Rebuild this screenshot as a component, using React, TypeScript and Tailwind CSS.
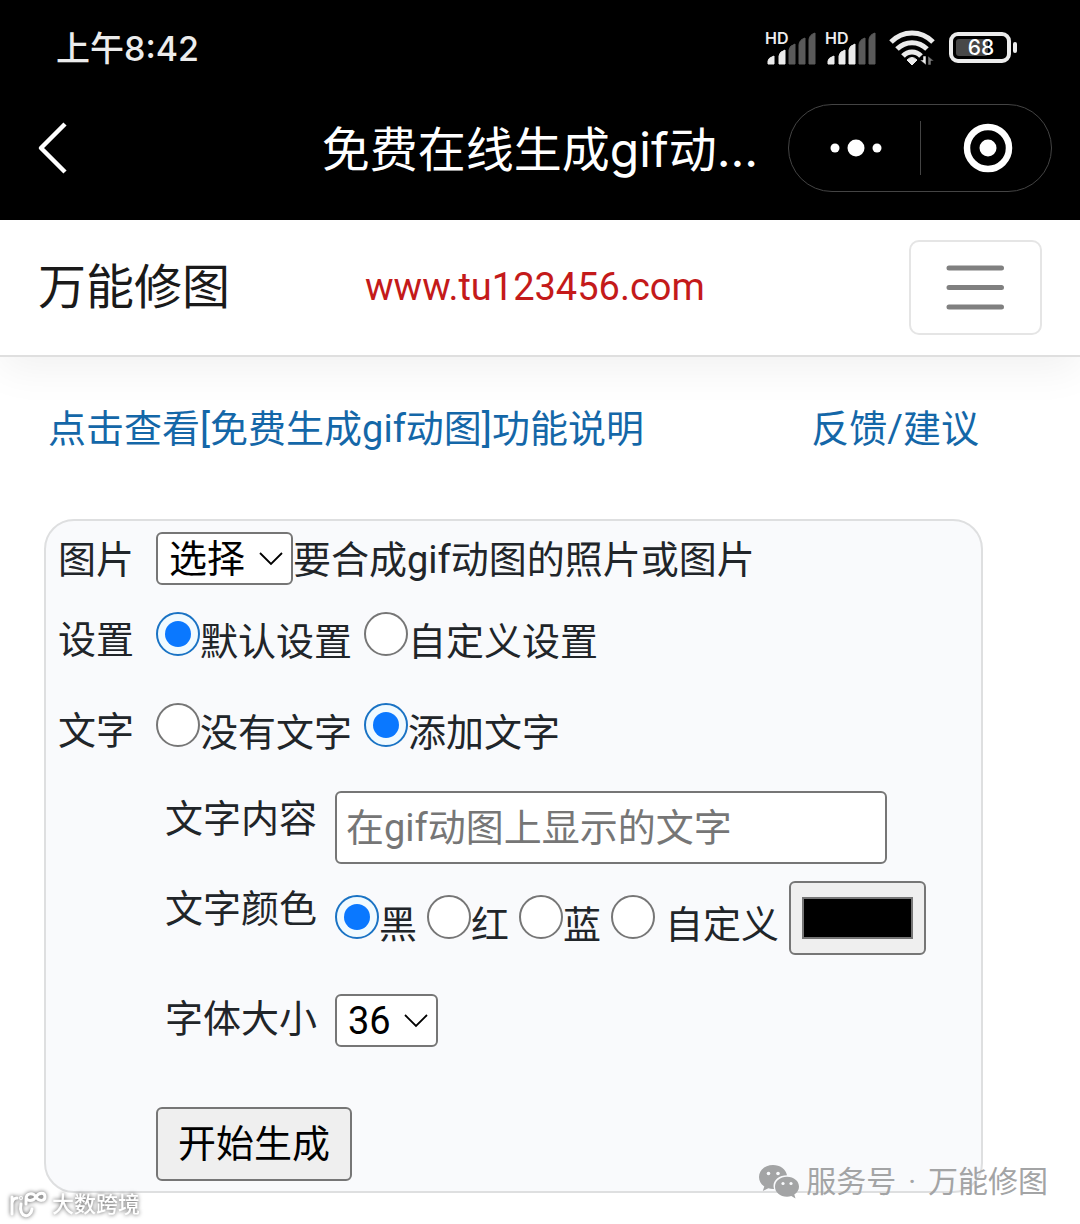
import { useState } from "react";
import type { ReactNode } from "react";

function Signal({ strong }: { strong: number }) {
  const bars = [
    "M3 26V23Q3 20 9 18V26Z",
    "M14 26V18Q14 14 20 12V26Z",
    "M24 26V12Q24 8 30 6V26Z",
    "M34 26V7Q34 2 40 0V26Z",
    "M44 26V2Q44 -3 50 -5V26Z",
  ];
  return (
    <svg width="52" height="46" viewBox="0 -13 52 46" aria-hidden="true">
      {bars.map((d, i) => (
        <path
          key={d}
          d={d}
          fill={i < strong ? "#ececec" : "#5a5a5a"}
          stroke={i < strong ? "#ececec" : "#5a5a5a"}
          strokeLinejoin="round"
        />
      ))}
      <text
        x="0"
        y="6"
        fill="#ececec"
        fontSize="16"
        fontWeight="600"
        fontFamily="Inter, sans-serif"
      >
        HD
      </text>
    </svg>
  );
}

function WifiIcon() {
  return (
    <svg width="46" height="36" viewBox="0 0 46 36" fill="none" aria-hidden="true">
      <g stroke="#ececec" strokeWidth="5">
        <path d="M2 12C14 0 32 0 44 12" />
        <path d="M8 19C16.500 10.500 29.500 10.500 38 19" />
        <path d="M14 26C19 20.500 27 20.500 32 26" />
      </g>
      <path d="M18 30Q23 25 28 30L23 35Z" fill="#ececec" stroke="#ececec" strokeLinejoin="round" />
      <path d="M37 26V35L31 30H34V26Z" fill="#ececec" stroke="#000" strokeWidth="0.500" />
      <path d="M39 35V26L45 31H42V35Z" fill="#777" stroke="#000" strokeWidth="0.500" />
    </svg>
  );
}

function BatteryIcon() {
  return (
    <svg width="70" height="32" viewBox="0 0 70 32" aria-hidden="true">
      <rect x="2" y="2" width="58" height="27" rx="7" fill="none" stroke="#ececec" strokeWidth="4" />
      <rect x="7" y="7" width="32" height="17" rx="3" fill="#484848" />
      <rect x="64" y="10" width="4" height="11" rx="2" fill="#ececec" />
      <text
        x="32"
        y="23"
        textAnchor="middle"
        fill="#fff"
        fontSize="21"
        fontWeight="500"
        fontFamily="Inter, sans-serif"
      >
        68
      </text>
    </svg>
  );
}

function StatusBar() {
  return (
    <div className="flex h-24 items-center justify-between pr-[61px] pl-14 text-[#ececec]">
      <span className="font-[Inter,'Noto_Sans_CJK_SC',sans-serif] text-[34px] font-medium">
        上午8:42
      </span>
      <div className="flex items-center gap-2">
        <Signal strong={2} />
        <Signal strong={3} />
        <div className="flex items-center gap-3.5 pl-1">
          <WifiIcon />
          <BatteryIcon />
        </div>
      </div>
    </div>
  );
}

function TitleBar() {
  return (
    <div className="grid grid-cols-[1fr_auto_1fr] items-center px-7 pt-2 pb-7">
      <button type="button" aria-label="返回" className="justify-self-start pl-2">
        <svg width="34" height="52" viewBox="0 0 34 52" fill="none" stroke="#fff" strokeWidth="4.500" strokeLinejoin="round">
          <path d="M29 2L5 26L29 50" />
        </svg>
      </button>
      <h1 className="pt-1 font-[Inter,'Noto_Sans_CJK_SC',sans-serif] text-5xl leading-[60px] text-white">
        免费在线生成gif动...
      </h1>
      <div className="flex h-[88px] w-[264px] items-center justify-self-end rounded-full border border-[#444] pl-1">
        <button type="button" aria-label="更多" className="flex flex-1 justify-center">
          <svg width="54" height="20" viewBox="0 0 54 20" fill="#fff">
            <circle cx="6" cy="10" r="4.500" />
            <circle cx="27" cy="10" r="8.500" />
            <circle cx="48" cy="10" r="4.500" />
          </svg>
        </button>
        <span className="h-[54px] w-px bg-[#444]" />
        <button type="button" aria-label="关闭" className="flex flex-1 justify-center pl-1">
          <svg width="50" height="50" viewBox="0 0 50 50">
            <circle cx="25" cy="25" r="21" fill="none" stroke="#fff" strokeWidth="6.500" />
            <circle cx="25" cy="25" r="8.500" fill="#fff" />
          </svg>
        </button>
      </div>
    </div>
  );
}

function SiteHeader() {
  return (
    <header className="flex h-[137px] items-center border-b-2 border-[#dfdfdf] bg-white px-[38px] shadow-[0_12px_40px_rgba(0,0,0,0.06)]">
      <a href="#" className="text-5xl text-[#1a1a1a]">
        万能修图
      </a>
      <a href="#" className="ml-[135px] text-[38px] text-[#c41a1a]">
        www.tu123456.com
      </a>
      <button
        type="button"
        aria-label="菜单"
        className="ml-auto flex h-[95px] w-[133px] items-center justify-center rounded-[10px] border-2 border-[#e5e5e5]"
      >
        <svg width="60" height="46" viewBox="0 0 60 46" stroke="#808080" strokeWidth="5" strokeLinecap="round">
          <path d="M3 3H55.500M3 22.500H55.500M3 42H55.500" />
        </svg>
      </button>
    </header>
  );
}

type RadioProps = {
  name: string;
  value: string;
  current: string;
  onPick: (value: string) => void;
  spaced?: boolean;
};

function Radio({ name, value, current, onPick, spaced }: RadioProps) {
  return (
    <label className={spaced ? "flex items-start gap-2.5 leading-[60px]" : "flex items-start leading-[60px]"}>
      <input
        type="radio"
        name={name}
        checked={current === value}
        onChange={() => onPick(value)}
        className="grid size-11 appearance-none place-content-center rounded-full border-2 border-[#767676] bg-white before:size-[26px] before:rounded-full checked:border-[#1a73c4] checked:bg-[#f0faff] checked:before:bg-[#0a78ff]"
      />
      {value}
    </label>
  );
}

function Select({ id, options }: { id: string; options: string[] }) {
  return (
    <div className="relative">
      <select
        id={id}
        className="block h-[53px] appearance-none rounded-md border-2 border-[#767676] bg-white pr-[45px] pl-[11px] leading-[48px] text-black"
      >
        {options.map((o) => (
          <option key={o}>{o}</option>
        ))}
      </select>
      <svg
        className="pointer-events-none absolute top-5 right-2.5"
        width="24"
        height="14"
        viewBox="0 0 24 14"
        fill="none"
        stroke="#000"
        strokeWidth="1.800"
      >
        <path d="M1 1L12 12L23 1" />
      </svg>
    </div>
  );
}

function Row({ title, htmlFor, children }: { title: string; htmlFor?: string; children: ReactNode }) {
  return (
    <div className="flex items-start">
      {htmlFor ? (
        <label htmlFor={htmlFor} className="w-[98px] shrink-0">
          {title}
        </label>
      ) : (
        <span className="w-[98px] shrink-0">{title}</span>
      )}
      {children}
    </div>
  );
}

function GifForm() {
  const [setting, setSetting] = useState("默认设置");
  const [caption, setCaption] = useState("添加文字");
  const [color, setColor] = useState("黑");
  const [custom, setCustom] = useState("#000000");

  return (
    <form
      onSubmit={(e) => e.preventDefault()}
      className="mt-[62px] rounded-[30px] border-2 border-[#dedfe0] bg-[#f9fafc] px-3 pt-[11px] pb-2.5 leading-[56px] text-[#212529]"
    >
      <Row title="图片" htmlFor="picture">
        <div className="flex items-start">
          <Select id="picture" options={["选择"]} />
          <span>要合成gif动图的照片或图片</span>
        </div>
      </Row>

      <div className="mt-6">
        <Row title="设置">
          <div className="flex gap-3">
            <Radio name="setting" value="默认设置" current={setting} onPick={setSetting} />
            <Radio name="setting" value="自定义设置" current={setting} onPick={setSetting} />
          </div>
        </Row>
      </div>

      <div className="mt-[31px]">
        <Row title="文字">
          <div className="flex gap-3">
            <Radio name="caption" value="没有文字" current={caption} onPick={setCaption} />
            <Radio name="caption" value="添加文字" current={caption} onPick={setCaption} />
          </div>
        </Row>
      </div>

      {/* caption options */}
      <div className="mt-7 grid grid-cols-[170px_1fr] items-start pl-[107px]">
        <label htmlFor="content">文字内容</label>
        <input
          id="content"
          type="text"
          placeholder="在gif动图上显示的文字"
          className="h-[73px] w-[552px] max-w-full rounded-md border-2 border-[#767676] bg-white px-[9px] placeholder:text-[#767676]"
        />

        <span className="mt-[17px]">文字颜色</span>
        <div className="mt-[17px] flex items-end gap-2.5">
          <Radio name="color" value="黑" current={color} onPick={setColor} />
          <Radio name="color" value="红" current={color} onPick={setColor} />
          <Radio name="color" value="蓝" current={color} onPick={setColor} />
          <Radio name="color" value="自定义" current={color} onPick={setColor} spaced />
          <input
            type="color"
            aria-label="自定义颜色"
            value={custom}
            onChange={(e) => setCustom(e.target.value)}
            className="h-[74px] w-[137px] shrink-0 rounded-md border-2 border-[#767676] bg-[#efefef] px-[11px] py-3.5 [&::-webkit-color-swatch]:border-2 [&::-webkit-color-swatch]:border-[#767676] [&::-webkit-color-swatch-wrapper]:p-0"
          />
        </div>

        <label htmlFor="size" className="mt-9">
          字体大小
        </label>
        <div className="mt-[39px] flex">
          <Select id="size" options={["36"]} />
        </div>
      </div>

      <button
        type="submit"
        className="mt-[60px] ml-[98px] block h-[74px] rounded-md border-2 border-[#767676] bg-[#efefef] px-5 text-black"
      >
        开始生成
      </button>
    </form>
  );
}

function AccountMark() {
  return (
    <div className="absolute right-8 bottom-[19px] flex items-center gap-1.5 text-[30px] leading-[46px] text-[#a3a4a5]">
      <svg width="42" height="36" viewBox="0 0 42 36" fill="currentColor" aria-hidden="true">
        <path d="M15 1C7 1 1 6.200 1 13c0 4 2 7.300 5.300 9.500L4.800 27l5.500-2.700c1.800.5 3.600.8 5.700.7A12 12 0 0 1 15.500 22c0-6.200 5.700-10.800 13.500-10.800C27.800 5 22 1 15 1Z" />
        <path d="M29 12.700c-7 0-12 4.400-12 10s5 10 12 10c1.500 0 3-.2 4.300-.7l4.200 2.400-1.200-4c2.900-1.800 4.700-4.600 4.700-7.700 0-5.600-5-10-12-10Z" />
        <g fill="#f9fafc">
          <circle cx="10.500" cy="9.500" r="1.800" />
          <circle cx="20" cy="9.500" r="1.800" />
          <circle cx="25" cy="19.500" r="1.600" />
          <circle cx="33" cy="19.500" r="1.600" />
        </g>
      </svg>
      <div className="flex gap-3">
        <span>服务号</span>
        <span>·</span>
        <span>万能修图</span>
      </div>
    </div>
  );
}

function SourceMark() {
  return (
    <div className="absolute bottom-1 left-2 flex items-center gap-1 text-[22px] leading-[30px] font-medium text-white drop-shadow-[0_0_2px_#555]">
      <svg width="40" height="28" viewBox="0 0 40 28" fill="none" stroke="#fff" strokeWidth="3" strokeLinecap="round" aria-hidden="true">
        <path d="M4 6V23M4 12Q5 7 9 7" />
        <path d="M13 13C10 27 23 28 24 18" />
        <circle cx="13" cy="7" r="0.500" />
        <path d="M18 13V8C18 2 25 1 28 6C31 11 37 10 37 6C37 1 31 1 28 6C25 11 19 10 18.500 7" />
      </svg>
      大数跨境
    </div>
  );
}

export default function App() {
  return (
    <div className="relative min-h-screen bg-white pb-[31px] font-[Roboto,'Noto_Sans_CJK_SC',sans-serif]">
      <div className="bg-black">
        <StatusBar />
        <TitleBar />
      </div>
      <SiteHeader />

      <main className="pt-11 pr-[97px] pl-11 text-[38px]">
        <nav className="flex justify-between px-1 leading-[56px] text-[#1467a8]">
          <a href="#">点击查看[免费生成gif动图]功能说明</a>
          <a href="#">反馈/建议</a>
        </nav>
        <GifForm />
      </main>

      <AccountMark />
      <SourceMark />
    </div>
  );
}
